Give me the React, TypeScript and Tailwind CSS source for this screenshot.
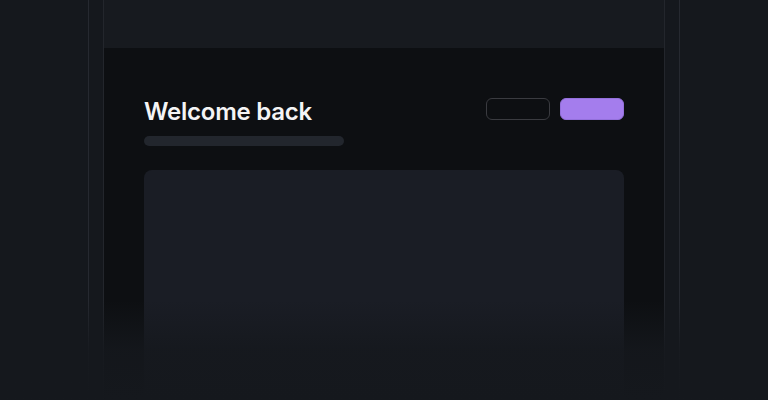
export default function App() {
  return (
    <div
      className="relative h-[400px] w-[768px] overflow-hidden bg-[#15181d]"
      style={{ fontFamily: "Inter, 'Noto Sans', sans-serif" }}
    >
      <div className="mx-auto flex h-full w-[592px] border-x border-[#262930] px-[14px]">
        <div className="flex h-full w-full flex-col overflow-hidden border-x border-[#23262c]">
          <div className="h-[48px] shrink-0 bg-[#171a1f]" />
          <div className="flex-1 bg-[#0d0f12] px-10 pt-12">
            <div className="flex items-start justify-between">
              <div>
                <h1 className="text-2xl leading-8 font-semibold tracking-[-0.01em] text-[#f4f4f5]">Welcome back</h1>
                <div className="mt-2 h-2.5 w-[200px] rounded-full bg-[#22262d]" />
              </div>
              <div className="mt-0.5 flex gap-2.5">
                <div className="h-[22px] w-16 rounded-md border border-[#3a3b40] bg-[#0d0f12]" />
                <div className="h-[22px] w-16 rounded-md border border-[#9470dc] bg-[#a47ded]" />
              </div>
            </div>
            <div className="mt-6 h-[260px] rounded-lg bg-[#1a1d25]" />
          </div>
        </div>
      </div>
      <div className="pointer-events-none absolute inset-x-0 bottom-0 h-[100px] bg-gradient-to-b from-transparent via-[#15181d]/85 to-[#15181d]" />
    </div>
  );
}
